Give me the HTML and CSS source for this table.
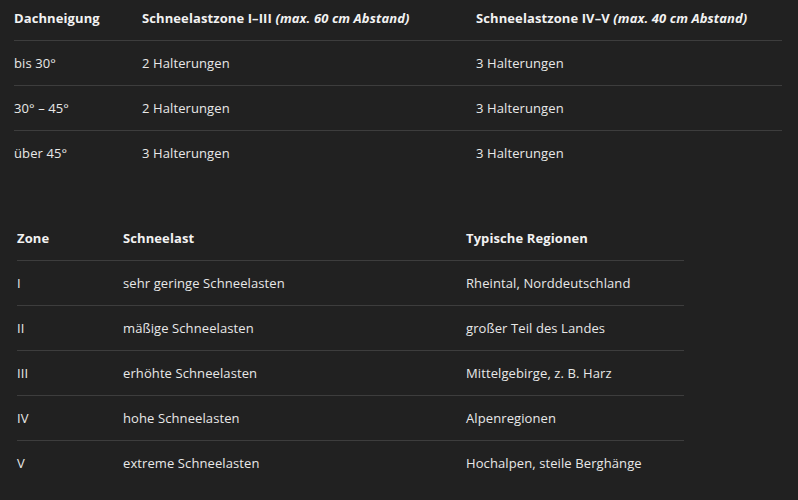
FILE: index.html
```html
<!DOCTYPE html>
<html lang="de">
<head>
<meta charset="utf-8">
<title>Schneefang Halterungen</title>
<link rel="stylesheet" href="styles.css">
</head>
<body>
<div class="page">
  <table class="grid grid-a">
    <colgroup><col class="a1"><col class="a2"><col></colgroup>
    <thead>
      <tr><th>Dachneigung</th><th>Schneelastzone I–III <em>(max. 60 cm Abstand)</em></th><th>Schneelastzone IV–V <em>(max. 40 cm Abstand)</em></th></tr>
    </thead>
    <tbody>
      <tr><td>bis 30°</td><td>2 Halterungen</td><td>3 Halterungen</td></tr>
      <tr><td>30° – 45°</td><td>2 Halterungen</td><td>3 Halterungen</td></tr>
      <tr><td>über 45°</td><td>3 Halterungen</td><td>3 Halterungen</td></tr>
    </tbody>
  </table>
  <table class="grid grid-b">
    <colgroup><col class="b1"><col class="b2"><col></colgroup>
    <thead>
      <tr><th>Zone</th><th>Schneelast</th><th>Typische Regionen</th></tr>
    </thead>
    <tbody>
      <tr><td>I</td><td>sehr geringe Schneelasten</td><td>Rheintal, Norddeutschland</td></tr>
      <tr><td>II</td><td>mäßige Schneelasten</td><td>großer Teil des Landes</td></tr>
      <tr><td>III</td><td>erhöhte Schneelasten</td><td>Mittelgebirge, z. B. Harz</td></tr>
      <tr><td>IV</td><td>hohe Schneelasten</td><td>Alpenregionen</td></tr>
      <tr><td>V</td><td>extreme Schneelasten</td><td>Hochalpen, steile Berghänge</td></tr>
    </tbody>
  </table>
</div>
</body>
</html>
```
FILE: styles.css
```css
html, body {
  margin: 0;
  background: #212121;
}
body {
  font-family: "Open Sans", "Noto Sans", sans-serif;
  font-size: 13px;
  letter-spacing: 0.1px;
  color: #e8e8e8;
  overflow: hidden;
}
.page {
  display: flex;
  flex-direction: column;
  align-items: flex-start;
  padding: 0 0 0 14px;
}
.grid {
  border-collapse: collapse;
  table-layout: fixed;
}
.grid th, .grid td {
  text-align: left;
  padding: 0;
  height: 44px;
  line-height: 20px;
  vertical-align: middle;
  white-space: nowrap;
}
.grid th {
  font-weight: 700;
  color: #f2f2f2;
}
.grid th em {
  font-style: italic;
}
.grid tr {
  border-bottom: 1px solid #3d3d3d;
}
.grid tbody tr:last-child {
  border-bottom: none;
}
.grid-a {
  width: 768px;
  margin-top: -4px;
}
.a1 { width: 128px; }
.a2 { width: 334px; }
.grid-b {
  width: 667px;
  margin-left: 3px;
  margin-top: 41px;
}
.b1 { width: 106px; }
.b2 { width: 343px; }
```
